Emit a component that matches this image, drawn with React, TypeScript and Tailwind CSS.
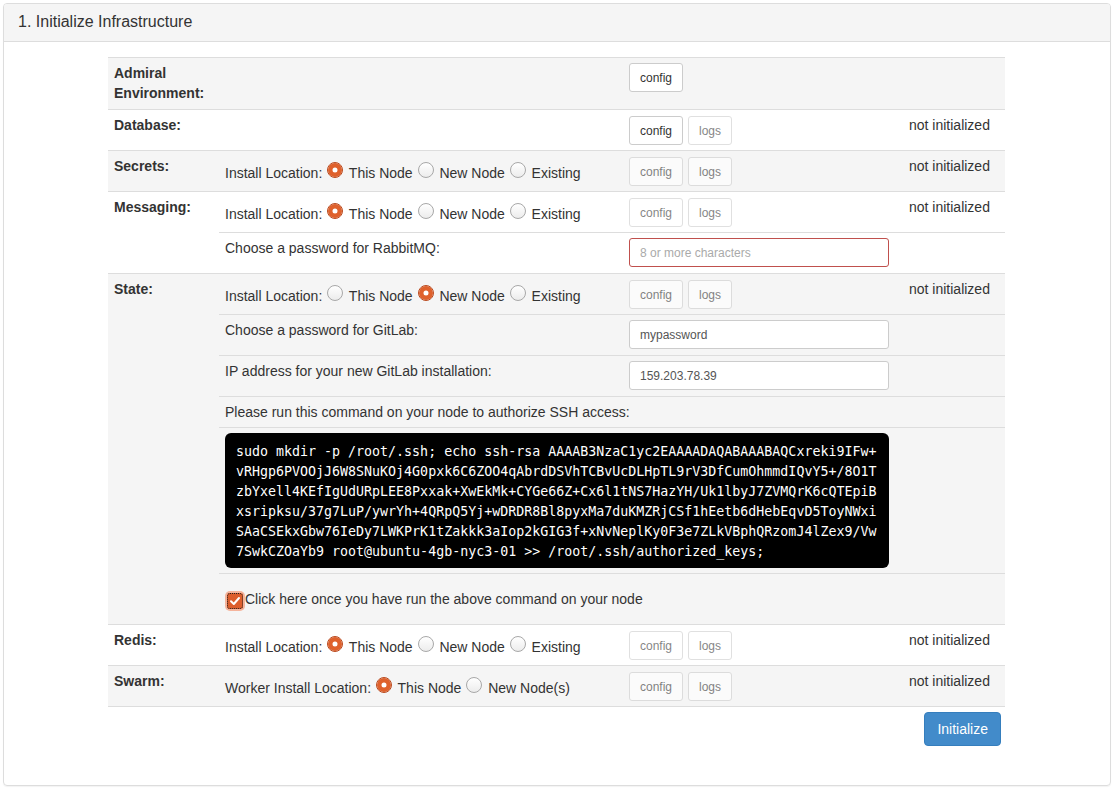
import type { ReactNode } from "react";
import clsx from "clsx";

const SSH_LINES = [
  "sudo mkdir -p /root/.ssh; echo ssh-rsa AAAAB3NzaC1yc2EAAAADAQABAAABAQCxreki9IFw+",
  "vRHgp6PVOOjJ6W8SNuKOj4G0pxk6C6ZOO4qAbrdDSVhTCBvUcDLHpTL9rV3DfCumOhmmdIQvY5+/8O1T",
  "zbYxell4KEfIgUdURpLEE8Pxxak+XwEkMk+CYGe66Z+Cx6l1tNS7HazYH/Uk1lbyJ7ZVMQrK6cQTEpiB",
  "xsripksu/37g7LuP/ywrYh+4QRpQ5Yj+wDRDR8Bl8pyxMa7duKMZRjCSf1hEetb6dHebEqvD5ToyNWxi",
  "SAaCSEkxGbw76IeDy7LWKPrK1tZakkk3aIop2kGIG3f+xNvNeplKy0F3e7ZLkVBphQRzomJ4lZex9/Vw",
  "7SwkCZOaYb9 root@ubuntu-4gb-nyc3-01 >> /root/.ssh/authorized_keys;",
];

const Radio = ({ checked }: { checked?: boolean }) => (
  <span
    className={clsx(
      "inline-block w-[16px] h-[16px] ml-[1px] mr-[2px] rounded-full border",
      checked
        ? "border-[#b9471b] bg-white shadow-[inset_0_0_0_4.5px_#df612c]"
        : "border-[#a8a8a8] bg-linear-to-b from-white to-[#ececec]"
    )}
  />
);

const Choice = ({ prefix, options, selected }: { prefix: string; options: string[]; selected: number }) => (
  <span className="whitespace-nowrap">
    {prefix}
    {options.map((opt, i) => (
      <span key={opt}>
        {" "}
        <Radio checked={i === selected} /> {opt}
      </span>
    ))}
  </span>
);

const Btn = ({ label, disabled }: { label: string; disabled?: boolean }) => (
  <button
    type="button"
    className={clsx(
      "h-[29px] px-[10px] rounded-[3px] border border-[#ccc] bg-white text-[12px] leading-[18px] text-[#333]",
      disabled && "opacity-[.6]"
    )}
  >
    {label}
  </button>
);

const Buttons = ({ active, logs = true }: { active?: boolean; logs?: boolean }) => (
  <div className="w-[280px] shrink-0 px-[6px] pt-[6px] pb-[5px] flex gap-[5px]">
    <Btn label="config" disabled={!active} />
    {logs && <Btn label="logs" disabled />}
  </div>
);

const Status = ({ text }: { text?: string }) => (
  <div className="flex-1 px-[6px] pt-[5px] leading-5">{text}</div>
);

function Row({ label, striped, children }: { label: string; striped?: boolean; children: ReactNode }) {
  return (
    <div className={clsx("flex border-t border-[#ddd]", striped ? "bg-[#f5f5f5]" : "bg-white")}>
      <div className="w-[111px] shrink-0 pl-[6px] pr-[5px] pt-[5px] pb-[6px] font-bold leading-5">{label}</div>
      <div className="flex-1 flex flex-col">{children}</div>
    </div>
  );
}

function Sub({ first, children }: { first?: boolean; children: ReactNode }) {
  return <div className={clsx("flex", !first && "border-t border-[#ddd]")}>{children}</div>;
}

const Content = ({ children, center }: { children?: ReactNode; center?: boolean }) => (
  <div className={clsx("w-[404px] shrink-0 px-[6px] leading-5", center ? "flex items-center pt-[2px]" : "pt-[5px]")}>
    {children}
  </div>
);

const Field = ({ value, placeholder, error }: { value?: string; placeholder?: string; error?: boolean }) => (
  <div className="w-[280px] shrink-0 px-[6px] pt-[5px] pb-[6px]">
    <input
      readOnly
      value={value}
      placeholder={placeholder}
      className={clsx(
        "w-[260px] h-[29px] px-[10px] rounded-[3px] border bg-white text-[12px] text-[#555] placeholder:text-[#aaa] outline-none",
        error ? "border-[#c0504d]" : "border-[#ccc]"
      )}
    />
  </div>
);

const LOC = ["This Node", "New Node", "Existing"];

export default function App() {
  return (
    <div className="p-[3px] bg-white font-['Liberation_Sans',Arial,sans-serif] text-[14px] text-[#333]">
      <div className="border border-[#ddd] rounded-[4px] shadow-[0_1px_1px_rgba(0,0,0,0.05)]">
        <div className="bg-[#f5f5f5] border-b border-[#ddd] rounded-t-[3px] px-[14px] pt-[9px] pb-[11px] text-[16px] leading-[17px]">
          1. Initialize Infrastructure
        </div>
        <div className="pt-[15px] pb-[39px]">
          <div className="w-[897px] ml-[104px]">
            <div className="border-b border-[#ddd]">
              <Row label="Admiral Environment:" striped>
                <Sub first>
                  <Content />
                  <div className="w-[280px] shrink-0 px-[6px] pt-[5px]">
                    <Btn label="config" />
                  </div>
                  <Status />
                </Sub>
              </Row>

              <Row label="Database:">
                <Sub first>
                  <Content />
                  <Buttons active />
                  <Status text="not initialized" />
                </Sub>
              </Row>

              <Row label="Secrets:" striped>
                <Sub first>
                  <Content center>
                    <Choice prefix="Install Location:" options={LOC} selected={0} />
                  </Content>
                  <Buttons />
                  <Status text="not initialized" />
                </Sub>
              </Row>

              <Row label="Messaging:">
                <Sub first>
                  <Content center>
                    <Choice prefix="Install Location:" options={LOC} selected={0} />
                  </Content>
                  <Buttons />
                  <Status text="not initialized" />
                </Sub>
                <Sub>
                  <Content>Choose a password for RabbitMQ:</Content>
                  <Field placeholder="8 or more characters" error />
                  <Status />
                </Sub>
              </Row>

              <Row label="State:" striped>
                <Sub first>
                  <Content center>
                    <Choice prefix="Install Location:" options={LOC} selected={1} />
                  </Content>
                  <Buttons />
                  <Status text="not initialized" />
                </Sub>
                <Sub>
                  <Content>Choose a password for GitLab:</Content>
                  <Field value="mypassword" />
                  <Status />
                </Sub>
                <Sub>
                  <Content>IP address for your new GitLab installation:</Content>
                  <Field value="159.203.78.39" />
                  <Status />
                </Sub>
                <Sub>
                  <div className="px-[6px] py-[5px] leading-5">
                    Please run this command on your node to authorize SSH access:
                  </div>
                </Sub>
                <Sub>
                  <div className="w-[684px] shrink-0 pl-[6px] pr-[14px] py-[5px]">
                    <pre className="bg-black text-white rounded-[6px] pl-[11px] pr-[8px] pt-[9px] pb-[6px] font-['DejaVu_Sans_Mono',monospace] text-[13.3px] leading-5 whitespace-pre">
                      {SSH_LINES.join("\n")}
                    </pre>
                  </div>
                </Sub>
                <Sub>
                  <div className="h-[50px] px-[6px] flex items-center">
                    <span className="ml-[2px] mt-[4px] inline-flex items-center justify-center w-[16px] h-[16px] rounded-[3px] bg-[#dc5e2d] ring-2 ring-[#f5b49c] outline-1 outline-dotted outline-[#222] -outline-offset-1">
                      <svg width="12" height="12" viewBox="0 0 12 12" fill="none">
                        <path d="M2 6.3 4.8 9 10 3" stroke="#fff" strokeWidth="2" strokeLinecap="round" strokeLinejoin="round" />
                      </svg>
                    </span>
                    <span className="ml-[2px]">Click here once you have run the above command on your node</span>
                  </div>
                </Sub>
              </Row>

              <Row label="Redis:">
                <Sub first>
                  <Content center>
                    <Choice prefix="Install Location:" options={LOC} selected={0} />
                  </Content>
                  <Buttons />
                  <Status text="not initialized" />
                </Sub>
              </Row>

              <Row label="Swarm:" striped>
                <Sub first>
                  <Content center>
                    <Choice prefix="Worker Install Location:" options={["This Node", "New Node(s)"]} selected={0} />
                  </Content>
                  <Buttons />
                  <Status text="not initialized" />
                </Sub>
              </Row>
            </div>

            <div className="flex justify-end pr-[4px] mt-[5px]">
              <button
                type="button"
                className="h-[34px] px-[12px] rounded-[4px] border border-[#357ebd] bg-[#428bca] text-white text-[14px] leading-5"
              >
                Initialize
              </button>
            </div>
          </div>
        </div>
      </div>
    </div>
  );
}
